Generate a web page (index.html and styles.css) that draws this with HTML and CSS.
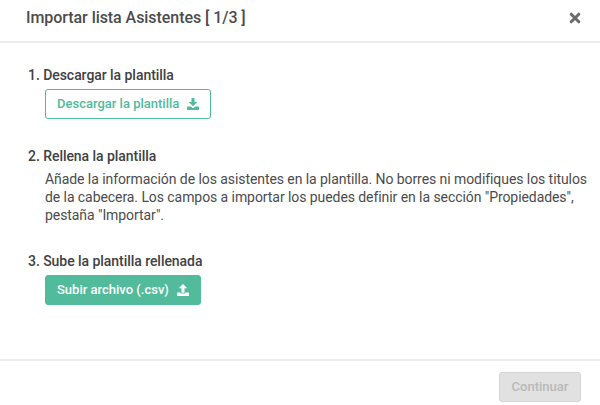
FILE: index.html
```html
<!DOCTYPE html>
<html lang="es">
<head>
<meta charset="utf-8">
<title>Importar lista Asistentes</title>
<link rel="stylesheet" href="styles.css">
</head>
<body>
<div class="modal">
  <header class="modal-header">
    <h1 class="title">Importar lista Asistentes [ 1/3 ]</h1>
    <button class="close" aria-label="Cerrar"><svg width="12" height="12" viewBox="0 0 12 12"><path d="M2.2 2.2 9.8 9.8M9.8 2.2 2.2 9.8"/></svg></button>
  </header>
  <main class="modal-body">
    <section class="step step-download">
      <h2 class="step-title">1. Descargar la plantilla</h2>
      <button class="btn btn-outline"><span>Descargar la plantilla</span><svg class="icon" width="12" height="12" viewBox="0 0 12 12"><path d="M4.5 0h3v4H10.3L6 8.3 1.7 4H4.5ZM.5 8.5H3.7L6 10.3 8.3 8.5H11.5Q12 8.5 12 9V11.5Q12 12 11.5 12H.5Q0 12 0 11.5V9Q0 8.5 .5 8.5Z"/></svg></button>
    </section>
    <section class="step step-fill">
      <h2 class="step-title">2. Rellena la plantilla</h2>
      <p class="text">Añade la información de los asistentes en la plantilla. No borres ni modifiques los titulos<br>de la cabecera. Los campos a importar los puedes definir en la sección "Propiedades",<br>pestaña "Importar".</p>
    </section>
    <section class="step">
      <h2 class="step-title">3. Sube la plantilla rellenada</h2>
      <button class="btn btn-solid"><span>Subir archivo (.csv)</span><svg class="icon" width="12" height="12" viewBox="0 0 12 12"><path d="M6 0 10.3 4.3H7.5V8.7H4.5V4.3H1.7ZM.5 8.5H3.7V9.6H8.3V8.5H11.5Q12 8.5 12 9V11.5Q12 12 11.5 12H.5Q0 12 0 11.5V9Q0 8.5 .5 8.5Z"/></svg></button>
    </section>
  </main>
  <footer class="modal-footer"><button class="btn btn-disabled" disabled>Continuar</button></footer>
</div>
</body>
</html>
```

FILE: styles.css
```css
* { box-sizing: border-box; }
body { margin: 0; background: #fff; color: #4b4b4d; font-family: Roboto, sans-serif; }
h1, h2, p { margin: 0; }
button { font-family: inherit; }
.modal { display: flex; flex-direction: column; width: 600px; height: 405px; overflow: hidden; }
.modal-header { display: flex; justify-content: space-between; align-items: flex-start; height: 43px; padding: 8px 19px 0 26px; border-bottom: 2px solid #ececec; }
.title { font-size: 16px; line-height: 20px; font-weight: 500; letter-spacing: -0.06px; white-space: nowrap; }
.close { display: flex; padding: 0; margin-top: 4px; border: 0; background: none; }
.close path { fill: none; stroke: #6b6b6b; stroke-width: 3; stroke-linecap: round; }
.modal-body { height: 316px; padding: 23px 0 0 28px; }
.step-title { font-size: 14px; line-height: 18px; font-weight: 500; letter-spacing: -0.05px; color: #414143; white-space: nowrap; }
.step-download { height: 81px; }
.step-fill { height: 105px; }
.text { margin: 5px 0 0 17px; font-size: 14px; line-height: 18px; letter-spacing: -0.07px; white-space: nowrap; }
.btn { display: flex; align-items: center; justify-content: space-between; height: 30px; padding: 0 11px; border: 1px solid; border-radius: 3px; font-size: 13px; line-height: 18px; font-weight: 500; white-space: nowrap; }
.btn-outline { width: 166px; margin: 5px 0 0 17px; color: #50bb9a; background: #fff; border-color: #50bb9a; }
.btn-solid { width: 156px; margin: 5px 0 0 17px; color: #fff; background: #52bb9b; border-color: #52bb9b; }
.icon { fill: currentColor; }
.modal-footer { display: flex; justify-content: flex-end; height: 46px; padding: 11px 19px 0 0; border-top: 2px solid #ececec; }
.btn-disabled { width: 82px; justify-content: center; padding: 0; color: #b9b9b9; background: #e1e1e1; border-color: #d5d5d5; }
```
